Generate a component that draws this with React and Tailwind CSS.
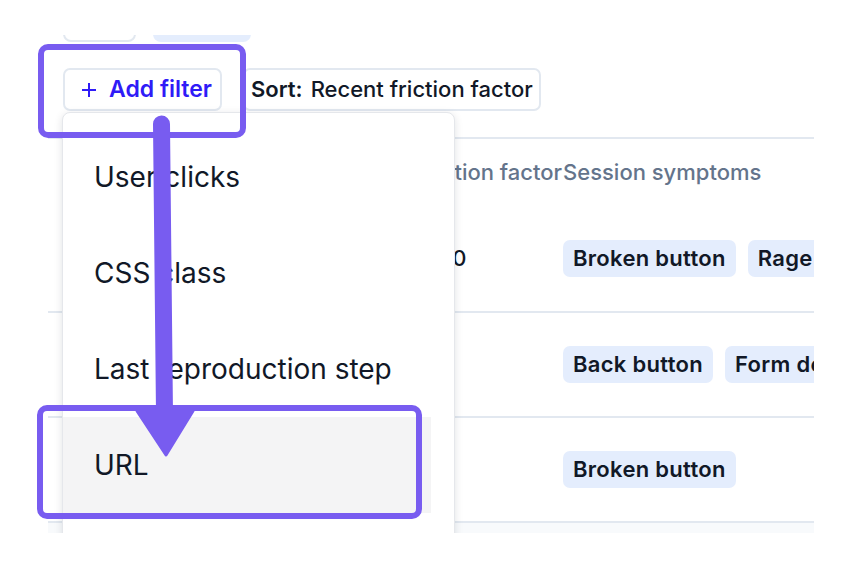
import React from 'react';

const ACCENT = '#785cf0';

const rows = [
  { value: '100', tags: ['Broken button', 'Rage clicks'] },
  { value: '', tags: ['Back button', 'Form deletion'] },
  { value: '', tags: ['Broken button'] },
];

const menu = ['User clicks', 'CSS class', 'Last reproduction step', 'URL'];

function Tag({ children }) {
  return (
    <span className="shrink-0 h-[37px] px-[10px] flex items-center rounded-[7px] bg-[#e4edfd] text-[22px] font-semibold tracking-[0.3px] text-[#111827] whitespace-nowrap">
      {children}
    </span>
  );
}

function Arrow() {
  return (
    <svg width="854" height="574" className="absolute inset-0 pointer-events-none">
      <line x1="161.5" y1="124" x2="164.5" y2="414" stroke={ACCENT} strokeWidth="17" strokeLinecap="round" />
      <polygon points="137,411 193,411 166,455" fill={ACCENT} stroke={ACCENT} strokeWidth="3" strokeLinejoin="round" />
    </svg>
  );
}

export default function App() {
  return (
    <div className="relative w-[854px] h-[574px] bg-white overflow-hidden pt-[35px]" style={{ fontFamily: 'Inter, "Noto Sans", sans-serif' }}>
      <div className="relative w-[814px] h-[498px] overflow-hidden">
        {/* chips above, mostly scrolled out */}
        <div className="flex gap-[17px] pl-[63px] -mt-[33px]">
          <div className="w-[73px] h-[40px] rounded-[8px] border-2 border-[#e2e8f0] bg-white" />
          <div className="w-[98px] h-[40px] rounded-[8px] bg-[#e4edfd]" />
        </div>

        <div className="flex gap-[21px] pl-[63px] mt-[26px]">
          <button className="w-[159px] h-[43px] rounded-[7px] border-2 border-[#e2e8f0] bg-white flex items-center pl-[16px] gap-[12px] text-[#2f1bf7]">
            <svg width="16" height="16" viewBox="0 0 16 16">
              <path d="M8 1v14M1 8h14" stroke="currentColor" strokeWidth="2" />
            </svg>
            <span className="text-[23px] font-semibold">Add filter</span>
          </button>
          <button className="w-[298px] h-[43px] rounded-[7px] border-2 border-[#e2e8f0] bg-white flex items-center pl-[6px] gap-[8px] text-[22px] text-[#111827] whitespace-nowrap">
            <span className="font-semibold">Sort:</span>
            <span className="font-medium">Recent friction factor</span>
          </button>
        </div>

        <div className="ml-[48px] mt-[26px] w-[766px]">
          <div className="h-[69px] border-t-2 border-[#e2e8f0] flex items-center text-[22px] font-medium text-[#64748b] whitespace-nowrap">
            <div className="w-[367px]" />
            <div className="w-[148px] overflow-hidden">Friction factor</div>
            <div className="flex-1">Session symptoms</div>
          </div>
          {rows.map((r, i) => (
            <div key={i} className={`h-[105px] flex items-center ${i === 0 ? '' : 'border-t-2 border-[#e2e8f0]'}`}>
              <div className="w-[367px]" />
              <div className="w-[148px] pl-[14px] text-[22px] font-medium text-[#111827]">{r.value}</div>
              <div className="flex-1 flex gap-[12px] overflow-hidden">
                {r.tags.map((t) => (
                  <Tag key={t}>{t}</Tag>
                ))}
              </div>
            </div>
          ))}
          <div className="h-[20px] border-t-2 border-[#e2e8f0] bg-[#f8fafc]" />
        </div>

        {/* dropdown menu */}
        <div className="absolute left-[62px] top-[77px] w-[393px] h-[460px] bg-white border border-[#e5e7eb] rounded-[8px] shadow-[0_2px_8px_rgba(15,23,42,0.12)] pt-[16px]">
          {menu.map((m, i) => (
            <div
              key={m}
              className={`w-[368px] h-[96px] flex items-center pl-[31px] text-[28px] text-[#111827] whitespace-nowrap ${i === 3 ? 'bg-[#f4f4f5]' : ''}`}
            >
              {m}
            </div>
          ))}
        </div>
      </div>

      {/* annotations */}
      <div className="absolute left-[38px] top-[44px] w-[208px] h-[94px] border-[6px] border-[#785cf0] rounded-[10px]" />
      <div className="absolute left-[37px] top-[405px] w-[385px] h-[114px] border-[6px] border-[#785cf0] rounded-[10px]" />
      <Arrow />
    </div>
  );
}
